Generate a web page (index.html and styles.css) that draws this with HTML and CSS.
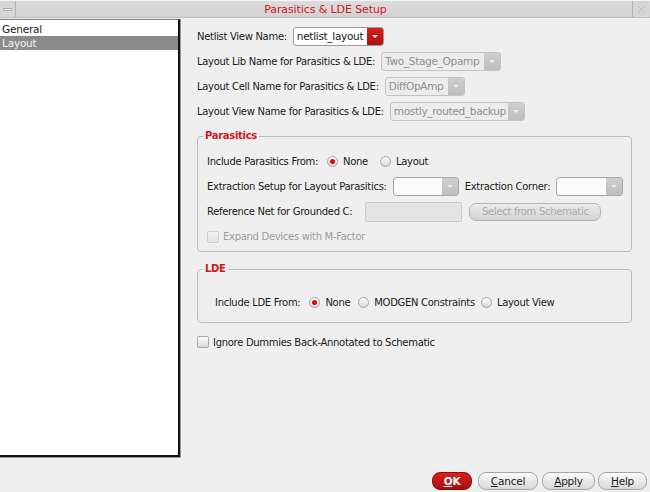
FILE: index.html
```html
<!DOCTYPE html>
<html>
<head>
<meta charset="utf-8">
<link rel="stylesheet" href="styles.css">
</head>
<body>
<div class="window">
  <div class="titlebar">
    <div class="tb-btn tb-menu"><span class="dash"></span></div>
    <div class="tb-title">Parasitics &amp; LDE Setup</div>
    <div class="tb-btn tb-close"><svg width="9" height="9" viewBox="0 0 9 9"><path d="M1 1L8 8M8 1L1 8" stroke="#c4c4c4" stroke-width="1.4" fill="none"/></svg></div>
  </div>
  <div class="main">
    <div class="sidebar">
      <div class="list">
        <div class="item">General</div>
        <div class="item selected">Layout</div>
      </div>
    </div>
    <div class="content">
      <div class="row r1">
        <span class="label">Netlist View Name:</span>
        <div class="combo active w90"><span class="val">netlist_layout</span><span class="drop red"><i></i></span></div>
      </div>
      <div class="row">
        <span class="label">Layout Lib Name for Parasitics &amp; LDE:</span>
        <div class="combo disabled w119"><span class="val">Two_Stage_Opamp</span><span class="drop"><i></i></span></div>
      </div>
      <div class="row">
        <span class="label">Layout Cell Name for Parasitics &amp; LDE:</span>
        <div class="combo disabled w79"><span class="val">DiffOpAmp</span><span class="drop"><i></i></span></div>
      </div>
      <div class="row">
        <span class="label">Layout View Name for Parasitics &amp; LDE:</span>
        <div class="combo disabled w134"><span class="val">mostly_routed_backup</span><span class="drop"><i></i></span></div>
      </div>

      <fieldset class="group parasitics">
        <legend>Parasitics</legend>
        <div class="row">
          <span class="label">Include Parasitics From:</span>
          <span class="radio on first"></span><span class="rlabel g13">None</span>
          <span class="radio"></span><span class="rlabel">Layout</span>
        </div>
        <div class="row">
          <span class="label">Extraction Setup for Layout Parasitics:</span>
          <div class="combo blank w65"><span class="val"></span><span class="drop"><i></i></span></div>
          <span class="label ml">Extraction Corner:</span>
          <div class="combo blank w66"><span class="val"></span><span class="drop"><i></i></span></div>
        </div>
        <div class="row">
          <span class="label wide">Reference Net for Grounded C:</span>
          <div class="input-dis"></div>
          <div class="btn-dis">Select from Schematic</div>
        </div>
        <div class="row">
          <span class="check dis"></span><span class="clabel dis">Expand Devices with M-Factor</span>
        </div>
      </fieldset>

      <fieldset class="group lde">
        <legend>LDE</legend>
        <div class="row lde-row">
          <span class="label">Include LDE From:</span>
          <span class="radio on first"></span><span class="rlabel g9">None</span>
          <span class="radio"></span><span class="rlabel g7">MODGEN Constraints</span>
          <span class="radio"></span><span class="rlabel">Layout View</span>
        </div>
      </fieldset>

      <div class="row ignore">
        <span class="check"></span><span class="clabel">Ignore Dummies Back-Annotated to Schematic</span>
      </div>
    </div>
  </div>
  <div class="footer">
    <div class="btn ok"><u>O</u>K</div>
    <div class="btn cancel"><u>C</u>ancel</div>
    <div class="btn apply"><u>A</u>pply</div>
    <div class="btn help"><u>H</u>elp</div>
  </div>
</div>
</body>
</html>
```

FILE: styles.css
```css
* { box-sizing: border-box; }
html, body { margin: 0; padding: 0; }
body {
  width: 650px;
  height: 492px;
  background: #efefef;
  font-family: "DejaVu Sans", sans-serif;
  font-size: 10px;
  letter-spacing: -0.3px;
  color: #1a1a1a;
  overflow: hidden;
}
.window { width: 650px; height: 492px; display: flex; flex-direction: column; }

.titlebar {
  height: 18px;
  flex: none;
  display: flex;
  align-items: stretch;
  background: linear-gradient(#dcdcdc, #d2d2d2);
  border-top: 1px solid #f4f4f4;
  border-bottom: 1px solid #bdbdbd;
}
.tb-btn {
  width: 16px;
  display: flex;
  align-items: center;
  justify-content: center;
  background: #d6d6d6;
}
.tb-menu { border-right: 1px solid #b4b4b4; }
.tb-close { border-left: 1px solid #b4b4b4; width: 17px; margin-right: 1px; }
.dash { display: block; width: 9px; height: 3px; background: #f2f2f2; border: 1px solid #a8a8a8; border-radius: 1px; }
.tb-title {
  flex: 1;
  text-align: center;
  color: #d4141c;
  font-size: 11px;
  letter-spacing: -0.1px;
  line-height: 17px;
  padding-left: 3px;
}

.main { flex: 1; display: flex; min-height: 0; }
.sidebar {
  width: 181px;
  margin-top: 1px;
  height: 439px;
  border-right: 1px solid #9a9a9a;
  border-bottom: 1px solid #9a9a9a;
}
.list {
  height: 100%;
  background: #fff;
  border-top: 1px solid #7a7a7a;
  border-right: 2px solid #111;
  border-bottom: 2px solid #111;
  padding-top: 2px;
}
.item { height: 14px; line-height: 14px; padding-left: 2px; font-size: 10.5px; letter-spacing: -0.2px; }
.item.selected { background: #8b8b8b; color: #f2f2f2; }

.content { flex: 1; padding: 6px 0 0 16px; }
.row { height: 25px; display: flex; align-items: center; white-space: nowrap; }
.label { margin-right: 6px; }
.label.ml { margin-left: 6px; }
.label.wide { margin-right: 13px; }

.combo {
  height: 19px;
  display: flex;
  border: 1px solid #aaa;
  border-radius: 3px;
  overflow: hidden;
  background: #fff;
  flex: none;
}
.combo .val { flex: 1; padding-left: 3px; line-height: 17px; font-size: 10.5px; }
.combo.active { border-color: #9a9a9a; }
.combo.disabled { background: #ececec; border-color: #c4c4c4; }
.combo.blank { background: #fbfbfb; border-color: #a8a8a8; }
.combo.disabled .val { color: #8f8f8f; }
.drop {
  width: 16px;
  display: flex;
  align-items: center;
  justify-content: center;
  background: linear-gradient(#cfcfcf, #bdbdbd);
}
.drop i { width: 0; height: 0; border-left: 3px solid transparent; border-right: 3px solid transparent; border-top: 3px solid #eee; }
.drop.red { background: linear-gradient(#d6201f, #b00d0d); }
.drop.red i { border-top-color: #fff; }
.w90 { width: 91px; }
.w119 { width: 120px; }
.w79 { width: 80px; }
.w134 { width: 135px; }
.w65 { width: 66px; }
.w66 { width: 67px; }

.group {
  margin: 6px 0 0 0;
  width: 435px;
  min-width: 0;
  border: 1px solid #bcbcbc;
  border-radius: 4px;
  padding: 0 0 0 9px;
}
.group legend {
  color: #d4141c;
  font-weight: bold;
  padding: 0 2px;
  margin-left: -4px;
  font-size: 10px;
  line-height: 12px;
}
.parasitics { height: 122px; padding-top: 7px; }
.lde { height: 60px; margin-top: 11px; padding-top: 15px; }
.lde-row { padding-left: 8px; }

.radio {
  width: 11px;
  height: 11px;
  border-radius: 50%;
  border: 1px solid #a4a4a4;
  background: linear-gradient(#fdfdfd, #d8d8d8);
  margin-right: 5px;
  display: flex;
  align-items: center;
  justify-content: center;
  flex: none;
}
.radio.first { margin-left: 3px; }
.radio.on::after { content: ""; width: 5px; height: 5px; border-radius: 50%; background: #d10f0f; }
.rlabel.g13 { margin-right: 12px; }
.rlabel.g9 { margin-right: 8px; }
.rlabel.g7 { margin-right: 6px; }

.input-dis {
  width: 97px;
  height: 20px;
  background: #e4e4e4;
  border: 1px solid #cdcdcd;
  border-radius: 2px;
  margin-right: 7px;
  flex: none;
}
.btn-dis {
  width: 132px;
  height: 18px;
  line-height: 16px;
  text-align: center;
  color: #a9a9a9;
  border: 1px solid #b4b4b4;
  border-radius: 7px;
  background: linear-gradient(#ececec, #d2d2d2);
  flex: none;
}

.check {
  width: 12px;
  height: 12px;
  border: 1px solid #a8a8a8;
  border-radius: 2px;
  background: linear-gradient(#fbfbfb, #d9d9d9);
  margin-right: 4px;
  flex: none;
}
.check.dis { border-color: #cfcfcf; background: linear-gradient(#f4f4f4, #e4e4e4); }
.clabel.dis { color: #9c9c9c; }
.ignore { margin-top: 7px; height: 24px; }

.footer {
  height: 35px;
  flex: none;
  display: flex;
  justify-content: flex-end;
  align-items: flex-end;
  padding: 0 3px 2px 0;
}
.btn {
  height: 18px;
  line-height: 16px;
  text-align: center;
  border: 1px solid #a6a6a6;
  border-radius: 8px;
  background: linear-gradient(#fbfbfb, #d9d9d9);
  color: #1c1c1c;
  font-size: 10.5px;
  letter-spacing: -0.2px;
}
.btn.ok { width: 40px; background: linear-gradient(#d8221f, #a80c0c); border-color: #8e0a0a; color: #fff; font-weight: bold; margin-right: 6px; }
.btn.cancel { width: 60px; margin-right: 4px; }
.btn.apply { width: 53px; margin-right: 3px; }
.btn.help { width: 49px; }
```
